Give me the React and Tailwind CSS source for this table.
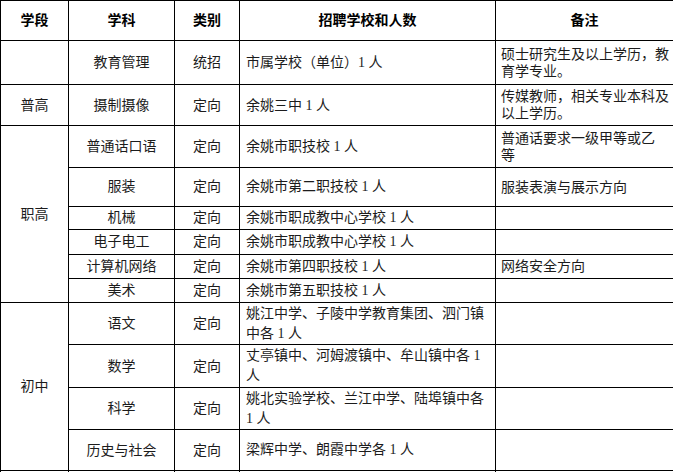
import React from 'react';

const font = { fontFamily: '"Liberation Serif", "Noto Sans CJK SC", serif' };

const B = 'border border-black';

// rows under 职高 and 初中 share the same shape, so keep them as data
const zhigao = [
  { h: 'h-[42px]', subject: '普通话口语', school: '余姚市职技校 1 人', note: ['普通话要求一级甲等或乙', '等'] },
  { h: 'h-[39px]', subject: '服装', school: '余姚市第二职技校 1 人', note: ['服装表演与展示方向'] },
  { h: 'h-[23px]', subject: '机械', school: '余姚市职成教中心学校 1 人', note: [] },
  { h: 'h-[25px]', subject: '电子电工', school: '余姚市职成教中心学校 1 人', note: [] },
  { h: 'h-[24px]', subject: '计算机网络', school: '余姚市第四职技校 1 人', note: ['网络安全方向'] },
  { h: 'h-[24px]', subject: '美术', school: '余姚市第五职技校 1 人', note: [] },
];

const chuzhong = [
  { h: 'h-[42px]', subject: '语文', school: ['姚江中学、子陵中学教育集团、泗门镇', '中各 1 人'] },
  { h: 'h-[43px]', subject: '数学', school: ['丈亭镇中、河姆渡镇中、牟山镇中各 1', '人'] },
  { h: 'h-[42px]', subject: '科学', school: ['姚北实验学校、兰江中学、陆埠镇中各', '1 人'] },
  { h: 'h-[41px]', subject: '历史与社会', school: ['梁辉中学、朗霞中学各 1 人'] },
];

const Lines = ({ items, leading }) => (
  <div className={`whitespace-nowrap ${leading}`}>
    {items.map((t, i) => (
      <div key={i}>{t}</div>
    ))}
  </div>
);

export default function App() {
  return (
    <div className="bg-white w-[673px] h-[472px] overflow-hidden" style={font}>
      <table className="table-fixed border-collapse w-[673px] text-[14px] text-[#1c1c1c]">
        <colgroup>
          <col className="w-[68px]" />
          <col className="w-[106px]" />
          <col className="w-[65px]" />
          <col className="w-[256px]" />
          <col className="w-[178px]" />
        </colgroup>
        <tbody>
          <tr className="h-[40px] font-bold text-black">
            <td className={`${B} text-center`}>学段</td>
            <td className={`${B} text-center`}>学科</td>
            <td className={`${B} text-center`}>类别</td>
            <td className={`${B} text-center`}>招聘学校和人数</td>
            <td className={`${B} text-center`}>备注</td>
          </tr>
          <tr className="h-[44px]">
            <td className={B}></td>
            <td className={`${B} text-center`}>教育管理</td>
            <td className={`${B} text-center`}>统招</td>
            <td className={`${B} pl-[6px]`}>市属学校（单位）1 人</td>
            <td className={`${B} pl-[5px]`}>
              <Lines items={['硕士研究生及以上学历，教', '育学专业。']} leading="leading-[17px]" />
            </td>
          </tr>
          <tr className="h-[41px]">
            <td className={`${B} text-center`}>普高</td>
            <td className={`${B} text-center`}>摄制摄像</td>
            <td className={`${B} text-center`}>定向</td>
            <td className={`${B} pl-[6px]`}>余姚三中 1 人</td>
            <td className={`${B} pl-[5px]`}>
              <Lines items={['传媒教师，相关专业本科及', '以上学历。']} leading="leading-[17px]" />
            </td>
          </tr>
          {zhigao.map((r, i) => (
            <tr key={r.subject} className={r.h}>
              {i === 0 && (
                <td rowSpan={zhigao.length} className={`${B} text-center`}>职高</td>
              )}
              <td className={`${B} text-center leading-none`}>{r.subject}</td>
              <td className={`${B} text-center leading-none`}>定向</td>
              <td className={`${B} pl-[6px] leading-none`}>{r.school}</td>
              <td className={`${B} pl-[5px] leading-none`}>
                <Lines items={r.note} leading="leading-[17px]" />
              </td>
            </tr>
          ))}
          {chuzhong.map((r, i) => (
            <tr key={r.subject} className={r.h}>
              {i === 0 && (
                <td rowSpan={chuzhong.length} className={`${B} text-center`}>初中</td>
              )}
              <td className={`${B} text-center`}>{r.subject}</td>
              <td className={`${B} text-center`}>定向</td>
              <td className={`${B} pl-[6px]`}>
                <Lines items={r.school} leading="leading-[20px]" />
              </td>
              <td className={B}></td>
            </tr>
          ))}
          <tr className="h-[40px]">
            <td className={B}></td>
            <td className={B}></td>
            <td className={B}></td>
            <td className={B}></td>
            <td className={B}></td>
          </tr>
        </tbody>
      </table>
    </div>
  );
}
